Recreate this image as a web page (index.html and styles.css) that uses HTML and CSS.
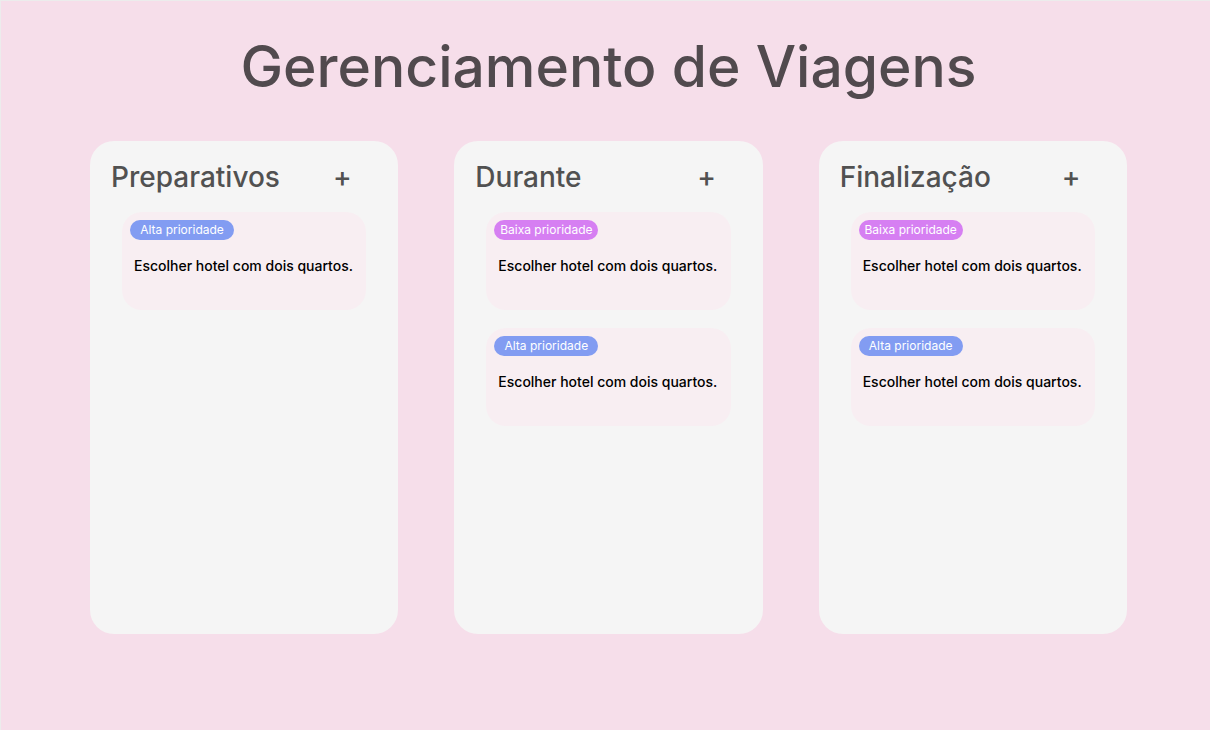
FILE: index.html
```html
<!DOCTYPE html>
<html lang="pt-BR">
<head>
<meta charset="utf-8">
<meta name="viewport" content="width=device-width, initial-scale=1">
<title>Gerenciamento de Viagens</title>
<link rel="stylesheet" href="styles.css">
</head>
<body>
<main class="page">
  <h1 class="title">Gerenciamento de Viagens</h1>
  <div class="board">
    <section class="column">
      <header class="column-header">
        <h2 class="column-title">Preparativos</h2>
        <button class="add" type="button" aria-label="Adicionar em Preparativos">+</button>
      </header>
      <div class="cards">
        <article class="card">
          <span class="tag tag-high">Alta prioridade</span>
          <p class="card-text">Escolher hotel com dois quartos.</p>
        </article>
      </div>
    </section>
    <section class="column">
      <header class="column-header">
        <h2 class="column-title">Durante</h2>
        <button class="add" type="button" aria-label="Adicionar em Durante">+</button>
      </header>
      <div class="cards">
        <article class="card">
          <span class="tag tag-low">Baixa prioridade</span>
          <p class="card-text">Escolher hotel com dois quartos.</p>
        </article>
        <article class="card">
          <span class="tag tag-high">Alta prioridade</span>
          <p class="card-text">Escolher hotel com dois quartos.</p>
        </article>
      </div>
    </section>
    <section class="column">
      <header class="column-header">
        <h2 class="column-title">Finalização</h2>
        <button class="add" type="button" aria-label="Adicionar em Finalização">+</button>
      </header>
      <div class="cards">
        <article class="card">
          <span class="tag tag-low">Baixa prioridade</span>
          <p class="card-text">Escolher hotel com dois quartos.</p>
        </article>
        <article class="card">
          <span class="tag tag-high">Alta prioridade</span>
          <p class="card-text">Escolher hotel com dois quartos.</p>
        </article>
      </div>
    </section>
  </div>
</main>
</body>
</html>
```
FILE: styles.css
```css
* {
  box-sizing: border-box;
}

body {
  margin: 0;
  background: #f6deea;
  color: #000;
  font-family: Inter, "Liberation Sans", sans-serif;
}

.page {
  display: flex;
  flex-direction: column;
  min-height: 100vh;
  padding: 30px 83px 96px 89px;
  border-top: 1px solid #ececec;
  border-left: 1px solid #ececec;
}

.title {
  margin: 0 0 38px;
  color: #514a4e;
  font-size: 57px;
  font-weight: 500;
  line-height: 72px;
  text-align: center;
}

.board {
  display: grid;
  flex: 1;
  grid-template-columns: repeat(3, 1fr);
  gap: 56px;
}

.column {
  padding: 16px 32px 32px;
  border-radius: 24px;
  background: #f5f5f5;
}

.column-header {
  display: flex;
  align-items: center;
  justify-content: space-between;
  margin: 0 8px 15px -11px;
}

.column-title {
  margin: 0;
  color: #515151;
  font-size: 28px;
  font-weight: 500;
  line-height: 40px;
}

.add {
  width: 32px;
  height: 40px;
  padding: 0;
  border: 0;
  background: none;
  color: #515151;
  font: 500 28px/40px Inter, "Liberation Sans", sans-serif;
  cursor: pointer;
}

.cards {
  display: grid;
  gap: 18px;
}

.card {
  min-height: 98px;
  padding: 8px;
  border-radius: 20px;
  background: #f8eef2;
}

.tag {
  display: block;
  width: 104px;
  border-radius: 10px;
  color: #fff;
  font-size: 12px;
  font-weight: 400;
  line-height: 20px;
  text-align: center;
}

.tag-high {
  background: #829cf2;
}

.tag-low {
  background: #d67ff2;
}

.card-text {
  margin: 16px 0 0 4px;
  font-size: 14px;
  font-weight: 500;
  line-height: 20px;
  white-space: nowrap;
}
```
